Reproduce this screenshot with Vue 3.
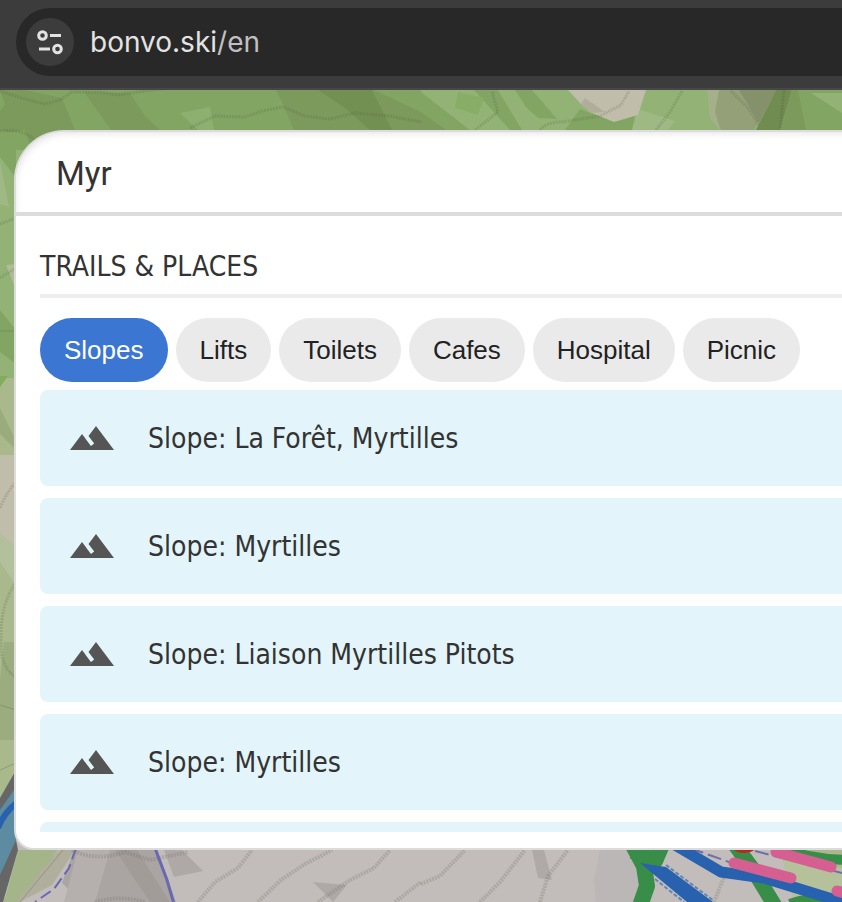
<template>
	<div class="page">
		<header class="browser-bar">
			<div class="address">
				<button class="site-info" type="button" aria-label="Site info">
					<svg viewBox="0 0 48 48" width="48" height="48" fill="none" stroke="#e3e3e3" stroke-width="3">
						<circle cx="16.5" cy="17.5" r="3.8" />
						<path d="M24 17.5h11M13 31h11" />
						<circle cx="31.5" cy="31" r="3.8" />
					</svg>
				</button>
				<span class="url">bonvo.ski<span class="path">/en</span></span>
			</div>
		</header>

		<main class="map">
			<svg class="terrain" viewBox="0 90 842 812" preserveAspectRatio="xMinYMin slice" aria-hidden="true">
				<rect y="90" width="842" height="812" fill="#92b375" />

				<!-- forest north -->
				<path fill="#82a563" d="M0 90H420L470 130V150H0Z" />
				<path fill="#7b9a5c" d="M0 90H25L62 98L75 130L40 175L25 130L0 134V112L5 104Z" />
				<path fill="#7b9a5c" d="M84 92L130 93L145 116L160 130H111Z" />
				<path fill="#7b9a5c" d="M276 90H374L421 112L446 130H294L283 104Z" />
				<path fill="#708c50" d="M318 90H372L392 130H370L345 108Z" fill-opacity=".7" />
				<path fill="#8daf70" d="M180 113L210 107L214 130H198Z" />
				<path fill="#92b375" d="M421 92L470 130H522L478 91H430Z" />
				<path fill="#82a563" d="M474 90H498L522 130H510Z" />
				<path fill="#82a563" d="M515 90H532L557 119L538 118L526 107Z" />
				<path fill="#87ad66" d="M458 92L484 98L478 115L455 108Z" />
				<path fill="#82a563" d="M565 130L580 109L612 121L635 115L632 130Z" />
				<path fill="#9eb983" d="M638 109L675 121L668 130H632Z" />
				<path fill="#c0bdab" d="M568 90H646L638 115L614 122L590 112L581 104Z" />
				<path fill="#b0ae9a" d="M585 98L605 112L591 113L581 104Z" />
				<path fill="#94a078" d="M707 90H776L754 130H721Z" />
				<path fill="#a5b08b" d="M707 90H719L715 112L720 130L710 118Z" />
				<path fill="#85916a" d="M739 90H776L759 123Z" />
				<path fill="#708c50" d="M776 90H792L780 130H756Z" />
				<path fill="#7b9a5c" d="M792 90H800L807 130H780Z" />
				<path fill="#82a563" d="M798 90H842V130H806Z" />
				<path fill="#92b375" d="M811 93H842V113Z" />

				<!-- west side -->
				<path fill="#82a563" d="M0 130L16 135V178L0 157Z" />
				<path fill="#9eb983" d="M0 161L9 207L0 204Z" />
				<path fill="#b0bc98" d="M6 265L16 264V290Z" />
				<path fill="#82a563" d="M0 310L16 330V364L0 352Z" />
				<path fill="#a9b98c" d="M0 378H16V902H0Z" />
				<path fill="#82ad5d" d="M0 376H8L0 387Z" />
				<path fill="#9aac7c" d="M0 408L16 441V450L0 434Z" />
				<path fill="#c0bdab" d="M0 455H16V548L0 534Z" />
				<path fill="#b2c09b" d="M0 534L16 548V586L0 562Z" />
				<path fill="#9bac7e" d="M4 642H16V740H0V680Z" />

				<!-- rocks south -->
				<path fill="#c2bdba" d="M0 840H842V902H0Z" />
				<path fill="#aaa5a2" d="M74 850H180L205 902H82L62 883Z" />
				<path fill="#b5b0ae" d="M78 850H110L95 902H64Z" />
				<path fill="#a19c98" d="M115 850H137L170 902H150Z" />
				<path fill="#c2bdba" d="M157 850H210L240 902H176Z" />
				<path fill="#aea9a7" d="M164 850H182L203 871L174 877Z" />
				<path fill="#bbb7b6" d="M600 850H636L647 902H596L594 880Z" />
				<path fill="#aea9a6" d="M313 882L347 885L333 902Z" />
				<path fill="#afa9a7" d="M532 850H544L552 880L538 878Z" />
				<path fill="#b0ae9c" d="M60 850H75L52 885L20 902H0Z" />
				<path fill="#a4b58a" d="M18 850H58L16 902H4Z" />
				<path fill="#b4c19b" d="M780 850H842V902H794Z" />
				<path fill="#a8b78c" d="M808 850H842V868L818 862Z" />
				<path fill="#666" d="M0 798L16 770V840L18 850L3 902H0Z" />
				<path fill="#5d8ba1" d="M0 810L16 787V840L0 875Z" />
				<path fill="none" stroke="#2861ae" stroke-width="6" d="M-2 828Q4 812 18 802" />

				<!-- contour lines -->
				<g fill="none" stroke="#4e593f" stroke-opacity=".2" stroke-width="3" stroke-dasharray="2 1">
					<path d="M0 91L25 99L45 104L60 100L72 92L100 92L117 95L145 91L170 88" />
					<path d="M190 128L215 116L245 117L262 111L283 107L305 116L330 119L355 113L390 116L421 122" />
					<path d="M0 131Q25 128 36 142M0 224L16 218M0 278L16 268" />
					<path d="M540 130Q546 122 562 122L600 116L621 105L629 91M492 92L498 112L475 130M682 91L670 112L656 130M731 91L748 108L759 125M784 90L780 130" />
					<path d="M0 508Q8 490 16 482M16 582Q0 605 1 640Q0 668 16 677" />
				</g>
				<g fill="none" stroke="#77716d" stroke-opacity=".28" stroke-width="4" stroke-dasharray="2 1">
					<path d="M198 902L215 882L238 868L252 850M258 902L281 880L305 864L332 850M318 902L350 880L374 868L390 850M395 902L421 882" />
					<path d="M421 884L440 876L465 850M480 902L500 882L525 850M540 902L548 876L568 850M714 902L727 870" />
					<path d="M72 850Q95 862 125 852L150 860L188 852M95 902Q120 895 145 902" />
				</g>
				<path fill="none" stroke="#606748" stroke-opacity=".35" d="M0 331H16M0 705L16 710M0 770L16 763M20 902L63 850" />

				<!-- footpaths and pistes -->
				<path fill="none" stroke="#6769b2" stroke-width="2" stroke-dasharray="12 5" d="M76 848L69 868L54 889L35 902" />
				<path fill="none" stroke="#6769b2" stroke-width="3" d="M155 848L167 880L174 904" />
				<path fill="none" stroke="#706daa" stroke-width="2" stroke-dasharray="14 5" d="M690 848L740 866L800 886L842 902M755 851L842 873" />
				<path fill="none" stroke="#388e48" stroke-width="16" stroke-linejoin="round" d="M630 840L644 866L647 886L640 906M633 851L655 861L664 840" />
				<path fill="none" stroke="#388e48" stroke-width="15" stroke-linejoin="round" d="M735 845L752 868L775 906" />
				<path fill="none" stroke="#388e48" stroke-width="10" d="M780 848Q812 860 850 860M790 904Q810 896 830 904" />
				<path fill="#2861ae" d="M640 863L666 867L713 902H687Z" />
				<path fill="none" stroke="#2861ae" stroke-opacity=".6" stroke-width="2" stroke-dasharray="4 2" d="M655 879L684 902M666 865L714 901" />
				<path fill="none" stroke="#2861ae" stroke-width="11" stroke-linejoin="round" d="M675 845L721 872L764 878L842 902" />
				<ellipse cx="744" cy="848" rx="11" ry="5" fill="#b9281b" />
				<g stroke="#d65f92" stroke-width="11" stroke-linecap="round">
					<path d="M734 863L791 878M776 852L831 867M837 891L860 897" />
				</g>
			</svg>

			<section class="panel">
				<input v-model="query" class="search" type="text" aria-label="Search" />
				<div class="results">
					<h2 class="title">TRAILS &amp; PLACES</h2>
					<div class="chips">
						<button
							v-for="c in categories"
							:key="c"
							type="button"
							:class="['chip', { active: c === current }]"
							@click="current = c"
						>
							{{ c }}
						</button>
					</div>
					<ul class="list">
						<li v-for="(item, i) in items" :key="i" class="item">
							<svg class="icon" viewBox="0 0 24 24" width="48" height="48" aria-hidden="true">
								<path d="M14 6l-3.75 5 2.85 3.8-1.6 1.2C9.81 13.75 7 10 7 10l-6 8h22L14 6z" fill="#555" />
							</svg>
							<span>{{ item }}</span>
						</li>
					</ul>
				</div>
			</section>
		</main>
	</div>
</template>

<script setup>
import { ref } from 'vue'

const query = ref('Myr')
const current = ref('Slopes')
const categories = ['Slopes', 'Lifts', 'Toilets', 'Cafes', 'Hospital', 'Picnic']
const items = ref([
	'Slope: La Forêt, Myrtilles',
	'Slope: Myrtilles',
	'Slope: Liaison Myrtilles Pitots',
	'Slope: Myrtilles',
	''
])
</script>

<style>
body {
	margin: 0;
}
</style>

<style scoped>
.page {
	display: flex;
	flex-direction: column;
	min-height: 100vh;
	overflow: hidden;
}
.browser-bar {
	padding: 8px 0 12px 16px;
	background: #3c3c3c;
	border-bottom: 2px solid #474747;
}
.address {
	display: flex;
	align-items: center;
	gap: 16px;
	height: 68px;
	padding-left: 10px;
	border-radius: 34px 0 0 34px;
	background: #282828;
}
.site-info {
	width: 48px;
	height: 48px;
	padding: 0;
	border: none;
	border-radius: 50%;
	background: #3c3c3c;
}
.site-info svg {
	display: block;
}
.url {
	font-family: Inter, Roboto, sans-serif;
	font-size: 28px;
	color: #e3e3e3;
}
.path {
	color: #c0c0c0;
}

.map {
	position: relative;
	flex: 1;
	padding: 40px 0 52px 14px;
}
.terrain {
	position: absolute;
	top: 0;
	left: 0;
	width: 100%;
	height: 100%;
}
.panel {
	position: relative;
	border: 2px solid #dcdcdc;
	border-right: none;
	border-radius: 50px 0 0 20px;
	background: #fff;
	overflow: hidden;
}
.search {
	display: block;
	box-sizing: border-box;
	width: 100%;
	height: 84px;
	padding: 2px 40px 0;
	border: none;
	border-bottom: 4px solid #dcdcdc;
	border-radius: 48px 0 0 0;
	background: #fff;
	box-shadow: inset 4px 6px 8px -6px rgba(0, 0, 0, 0.15);
	font-family: Roboto, sans-serif;
	font-size: 33px;
	color: #333;
	outline: none;
}
.results {
	padding: 24px 0 16px 24px;
	font-family: "DejaVu Sans Condensed", "Noto Sans", sans-serif;
	font-size: 28px;
	color: #333;
}
.title {
	margin: 0 0 20px;
	border-bottom: 4px solid #eee;
	font-size: 28px;
	font-weight: 400;
	line-height: 54px;
}
.chips {
	display: flex;
	gap: 8px;
	margin-bottom: 8px;
}
.chip {
	height: 64px;
	padding: 0 24px;
	border: none;
	border-radius: 32px;
	background: #eaeaea;
	font-family: "Liberation Sans", Arial, sans-serif;
	font-size: 26px;
	color: #222;
	cursor: pointer;
}
.chip.active {
	background: #3b76d2;
	color: #fff;
}
.list {
	display: flex;
	flex-direction: column;
	gap: 12px;
	max-height: 442px;
	margin: 0;
	padding: 0;
	list-style: none;
	overflow: hidden;
}
.item {
	display: flex;
	flex-shrink: 0;
	align-items: center;
	gap: 32px;
	height: 96px;
	padding: 0 28px;
	border-radius: 8px 0 0 8px;
	background: #e3f5fa;
}
.icon {
	flex-shrink: 0;
}
</style>
